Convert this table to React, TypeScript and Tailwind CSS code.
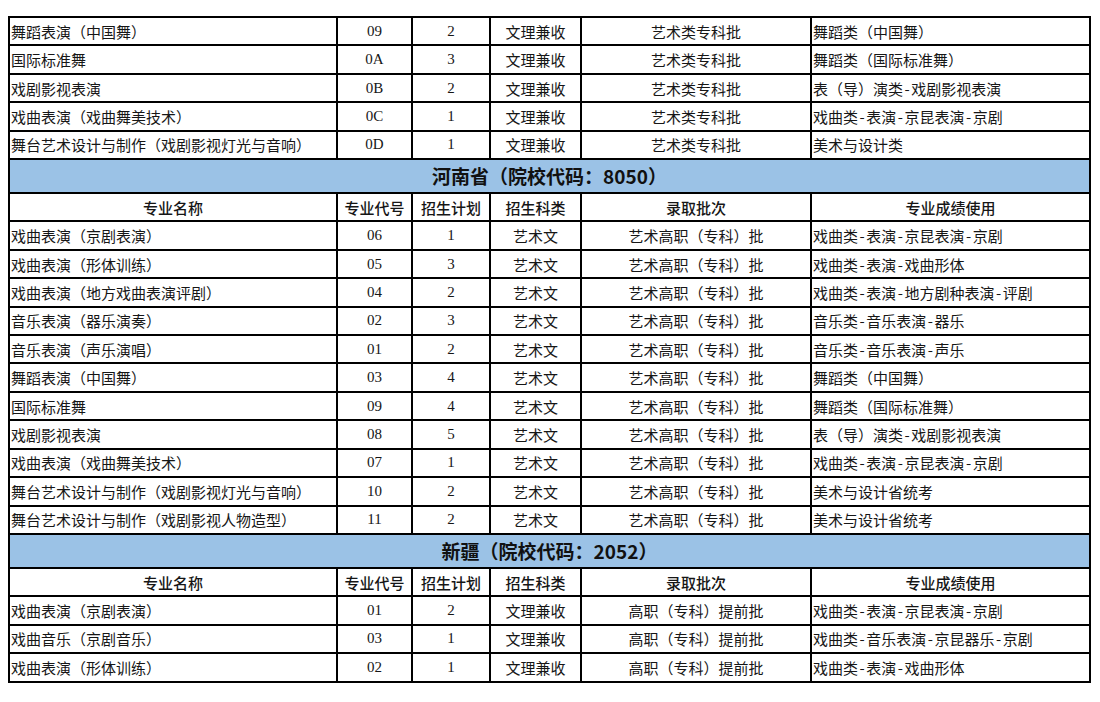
import React from 'react';

type Row = [string, string, string, string, string, string];

interface Section {
  title?: string;
  rows: Row[];
}

const sections: Section[] = [
  {
    rows: [
      ['舞蹈表演（中国舞）', '09', '2', '文理兼收', '艺术类专科批', '舞蹈类（中国舞）'],
      ['国际标准舞', '0A', '3', '文理兼收', '艺术类专科批', '舞蹈类（国际标准舞）'],
      ['戏剧影视表演', '0B', '2', '文理兼收', '艺术类专科批', '表（导）演类-戏剧影视表演'],
      ['戏曲表演（戏曲舞美技术）', '0C', '1', '文理兼收', '艺术类专科批', '戏曲类-表演-京昆表演-京剧'],
      ['舞台艺术设计与制作（戏剧影视灯光与音响）', '0D', '1', '文理兼收', '艺术类专科批', '美术与设计类'],
    ],
  },
  {
    title: '河南省（院校代码：8050）',
    rows: [
      ['戏曲表演（京剧表演）', '06', '1', '艺术文', '艺术高职（专科）批', '戏曲类-表演-京昆表演-京剧'],
      ['戏曲表演（形体训练）', '05', '3', '艺术文', '艺术高职（专科）批', '戏曲类-表演-戏曲形体'],
      ['戏曲表演（地方戏曲表演评剧）', '04', '2', '艺术文', '艺术高职（专科）批', '戏曲类-表演-地方剧种表演-评剧'],
      ['音乐表演（器乐演奏）', '02', '3', '艺术文', '艺术高职（专科）批', '音乐类-音乐表演-器乐'],
      ['音乐表演（声乐演唱）', '01', '2', '艺术文', '艺术高职（专科）批', '音乐类-音乐表演-声乐'],
      ['舞蹈表演（中国舞）', '03', '4', '艺术文', '艺术高职（专科）批', '舞蹈类（中国舞）'],
      ['国际标准舞', '09', '4', '艺术文', '艺术高职（专科）批', '舞蹈类（国际标准舞）'],
      ['戏剧影视表演', '08', '5', '艺术文', '艺术高职（专科）批', '表（导）演类-戏剧影视表演'],
      ['戏曲表演（戏曲舞美技术）', '07', '1', '艺术文', '艺术高职（专科）批', '戏曲类-表演-京昆表演-京剧'],
      ['舞台艺术设计与制作（戏剧影视灯光与音响）', '10', '2', '艺术文', '艺术高职（专科）批', '美术与设计省统考'],
      ['舞台艺术设计与制作（戏剧影视人物造型）', '11', '2', '艺术文', '艺术高职（专科）批', '美术与设计省统考'],
    ],
  },
  {
    title: '新疆（院校代码：2052）',
    rows: [
      ['戏曲表演（京剧表演）', '01', '2', '文理兼收', '高职（专科）提前批', '戏曲类-表演-京昆表演-京剧'],
      ['戏曲音乐（京剧音乐）', '03', '1', '文理兼收', '高职（专科）提前批', '戏曲类-音乐表演-京昆器乐-京剧'],
      ['戏曲表演（形体训练）', '02', '1', '文理兼收', '高职（专科）提前批', '戏曲类-表演-戏曲形体'],
    ],
  },
];

const headers = ['专业名称', '专业代号', '招生计划', '招生科类', '录取批次', '专业成绩使用'];

const cjk = "font-['Noto_Sans_CJK_SC',sans-serif]";
const serif = "font-['Liberation_Serif','Noto_Sans_CJK_SC',serif]";
const cell = 'border-2 border-black h-[28.42px] p-0 leading-none whitespace-nowrap';

// the source sheet's font draws "-" half-width, a bit wider than Noto's hyphen
const Dashed: React.FC<{ text: string }> = ({ text }) => {
  const parts = text.split('-');
  return (
    <>
      {parts.map((p, i) => (
        <React.Fragment key={i}>
          {i > 0 && <span className="mx-[1.5px]">-</span>}
          {p}
        </React.Fragment>
      ))}
    </>
  );
};

const App: React.FC = () => {
  return (
    <div className="bg-white w-[1100px] h-[702px] pt-[16px] pl-[8px] text-[#161616]">
      <table className="table-fixed border-collapse w-[1082px]">
        <colgroup>
          <col className="w-[328px]" />
          <col className="w-[75px]" />
          <col className="w-[78px]" />
          <col className="w-[91px]" />
          <col className="w-[230px]" />
          <col className="w-[279px]" />
        </colgroup>
        <tbody>
          {sections.map((section, si) => (
            <React.Fragment key={si}>
              {section.title && (
                <>
                  <tr>
                    <td
                      colSpan={6}
                      className={`border-2 border-black bg-[#9BC2E6] h-[34px] p-0 text-center text-[19px] font-semibold text-[#111] ${cjk}`}
                    >
                      {section.title}
                    </td>
                  </tr>
                  <tr>
                    {headers.map((h) => (
                      <td key={h} className={`${cell} text-center text-[15px] font-medium ${cjk}`}>
                        {h}
                      </td>
                    ))}
                  </tr>
                </>
              )}
              {section.rows.map((row, ri) => (
                <tr key={ri}>
                  <td className={`${cell} pl-[1px] text-left text-[15px] ${cjk}`}>{row[0]}</td>
                  <td className={`${cell} text-center text-[15px] ${serif}`}>{row[1]}</td>
                  <td className={`${cell} text-center text-[15px] ${serif}`}>{row[2]}</td>
                  <td className={`${cell} text-center text-[15px] ${cjk}`}>{row[3]}</td>
                  <td className={`${cell} text-center text-[15px] ${cjk}`}>{row[4]}</td>
                  <td className={`${cell} pl-[1px] text-left text-[15px] ${cjk}`}>
                    <Dashed text={row[5]} />
                  </td>
                </tr>
              ))}
            </React.Fragment>
          ))}
        </tbody>
      </table>
    </div>
  );
};

export default App;
